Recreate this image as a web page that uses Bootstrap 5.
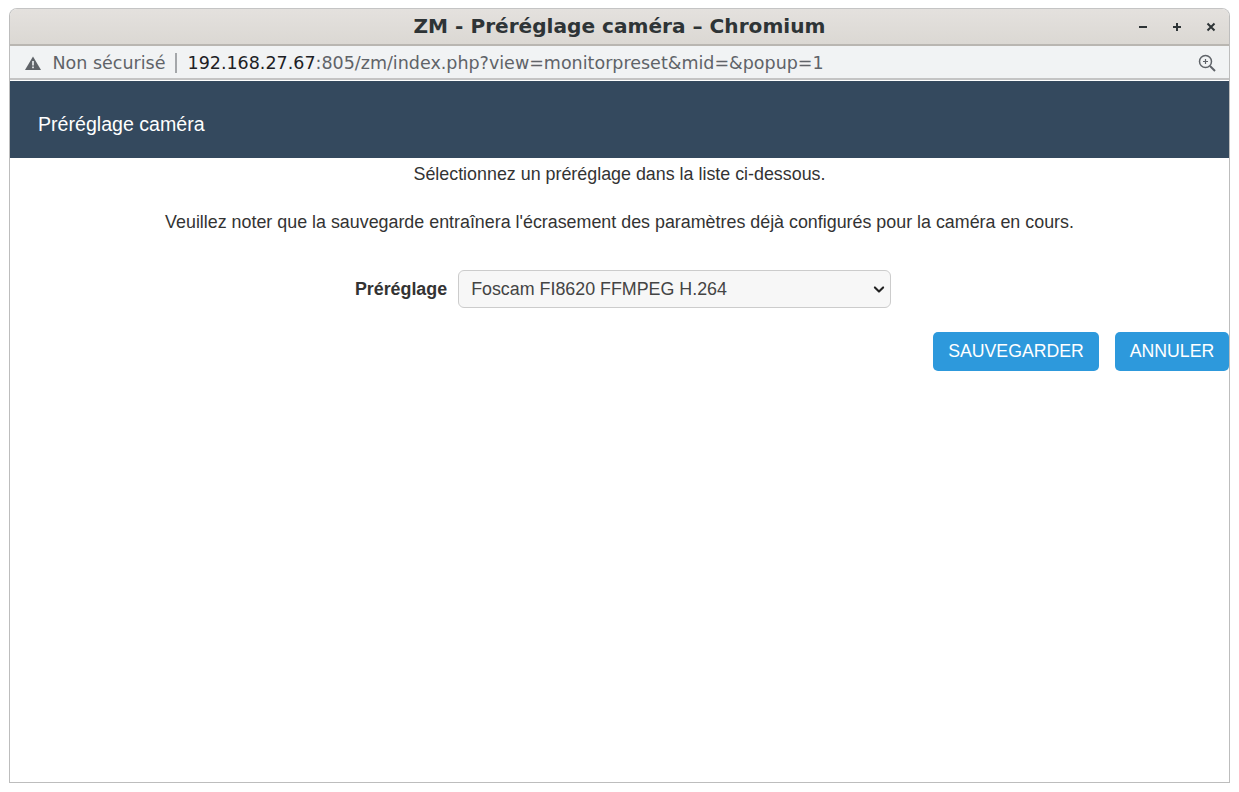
<!DOCTYPE html>
<html lang="fr">
<head>
<meta charset="utf-8">
<title>ZM - Préréglage caméra</title>
<link href="https://cdn.jsdelivr.net/npm/bootstrap@5.3.0/dist/css/bootstrap.min.css" rel="stylesheet">
<style>
html,body{height:100%;background:#fff;overflow:hidden}
body{padding:8px 9px 9px 9px;font-family:"Liberation Sans",Arial,sans-serif;color:#333}
.win{height:775px;width:1221px;border:1px solid #bdbdbd;border-top-color:#c4c4c4;border-radius:8px 8px 0 0;overflow:hidden}
.titlebar{height:37px;background:linear-gradient(#e4e1de,#dbd8d3);border-bottom:2px solid #b9b6b1;font:700 20.1px "DejaVu Sans",sans-serif;color:#2e3436;position:relative;padding-bottom:2px}
.winbtns{position:absolute;right:12px;top:0;height:100%;gap:22px}
.addr{height:34px;background:#f1f3f4;border-bottom:2px solid #c4c4c4;font:17.5px "DejaVu Sans",sans-serif;color:#5f6368;padding:2px 13px 0 14px;margin-bottom:1px}
.warnico{margin-right:10.500px}
.addr .sep{width:2px;height:20px;background:#a4a7aa;margin:0 11px 0 9px}
.addr .host{color:#202124}
.hdr{height:77px;background:#34495e;color:#fff;font-size:19.6px;padding:10px 0 0 28px}
.intro{font-size:17.87px;line-height:24px;text-align:center;color:#333}
.intro p{margin:0}
.formline{margin-top:36px;padding-left:6px}
.lbl{font-size:17.85px;font-weight:700;margin:0 11px 0 0;padding-left:1px}
.pick{width:433px;height:38px;font-size:17.85px;background-color:#f7f7f7;color:#444;border-color:#ccc;padding:0 36px 0 12px;border-radius:6px;background-position:right 4px center;background-size:14px 11px;--bs-form-select-bg-img:url("data:image/svg+xml,%3csvg xmlns='http://www.w3.org/2000/svg' viewBox='0 0 16 16'%3e%3cpath fill='none' stroke='%23222' stroke-linecap='round' stroke-linejoin='round' stroke-width='3' d='m2 5 6 6 6-6'/%3e%3c/svg%3e")}
.act{background:#2d99dc;color:#fff;border:0;font-size:17.7px;height:39px;padding:0;border-radius:5px}
.act:hover{background:#2d99dc;color:#fff}
.act-save{width:166px}
.act-undo{width:114px}
</style>
</head>
<body>
<div class="win d-flex flex-column">
  <div class="titlebar d-flex align-items-center justify-content-center flex-shrink-0">
    <span>ZM - Préréglage caméra – Chromium</span>
    <div class="winbtns d-flex align-items-center">
      <svg width="12" height="12" viewBox="0 0 12 12"><rect x="2" y="5" width="8" height="2" fill="#2e3436"/></svg>
      <svg width="12" height="12" viewBox="0 0 12 12"><path d="M2 5h3V2h2v3h3v2H7v3H5V7H2z" fill="#2e3436"/></svg>
      <svg width="12" height="12" viewBox="0 0 12 12"><path d="M2.500 2.500l7 7M9.500 2.500l-7 7" stroke="#2e3436" stroke-width="2"/></svg>
    </div>
  </div>
  <div class="addr d-flex align-items-center flex-shrink-0">
    <svg class="warnico" width="18" height="16" viewBox="0 0 18 16"><path d="M9 1.500L17 15H1z" fill="#5f6368"/><rect x="8.200" y="6" width="1.600" height="4.500" fill="#f1f3f4"/><rect x="8.200" y="11.500" width="1.600" height="1.700" fill="#f1f3f4"/></svg>
    <span>Non sécurisé</span><span class="sep"></span>
    <span><span class="host">192.168.27.67</span>:805/zm/index.php?view=monitorpreset&amp;mid=&amp;popup=1</span>
    <svg class="ms-auto" width="18" height="18" viewBox="0 0 18 18" fill="none" stroke="#5f6368"><circle cx="7.500" cy="7.500" r="6" stroke-width="1.500"/><path d="M12 12l5 5" stroke-width="2"/><path d="M7.500 5v5M5 7.500h5" stroke-width="1.200"/></svg>
  </div>
  <div class="hdr d-flex align-items-center flex-shrink-0">Préréglage caméra</div>
  <div class="flex-grow-1">
    <div class="intro pt-1">
      <p>Sélectionnez un préréglage dans la liste ci-dessous.</p>
      <p class="mt-4">Veuillez noter que la sauvegarde entraînera l'écrasement des paramètres déjà configurés pour la caméra en cours.</p>
    </div>
    <div class="formline d-flex justify-content-center align-items-center">
      <label class="lbl" for="p">Préréglage</label>
      <select id="p" class="form-select pick"><option>Foscam FI8620 FFMPEG H.264</option></select>
    </div>
    <div class="d-flex justify-content-end gap-3 mt-4">
      <button class="btn act act-save">SAUVEGARDER</button>
      <button class="btn act act-undo">ANNULER</button>
    </div>
  </div>
</div>
<script src="https://cdn.jsdelivr.net/npm/bootstrap@5.3.0/dist/js/bootstrap.bundle.min.js"></script>
</body>
</html>
